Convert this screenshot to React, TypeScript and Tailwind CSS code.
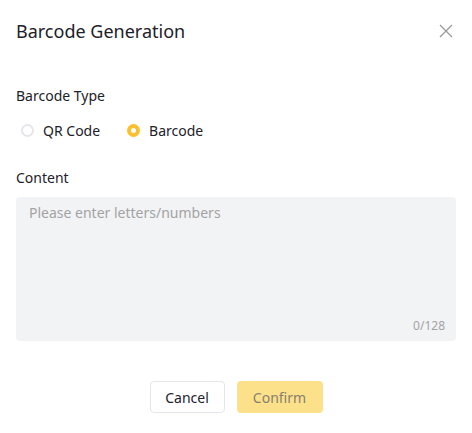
import { useState } from 'react';

const font = { fontFamily: '"Noto Sans", "Segoe UI", sans-serif' };

const Radio = ({ checked, label, onClick }: { checked: boolean; label: string; onClick: () => void }) => (
  <label className="flex items-center cursor-pointer" onClick={onClick}>
    {checked ? (
      <span className="w-[13px] h-[13px] rounded-full bg-[#fbc02d] flex items-center justify-center">
        <span className="w-[5px] h-[5px] rounded-full bg-white" />
      </span>
    ) : (
      <span className="w-[13px] h-[13px] rounded-full border-2 border-[#e5e6eb] bg-white" />
    )}
    <span className="ml-[9px] text-[14px] text-[#1d2129]">{label}</span>
  </label>
);

const App = () => {
  const [type, setType] = useState<'qr' | 'bar'>('bar');
  const [text, setText] = useState('');

  return (
    <div className="w-[472px] h-[433px] bg-white" style={font}>
      <div className="flex items-center justify-between pl-4 pr-[19px] pt-[19px]">
        <h2 className="text-[18px] leading-6 text-[#1d2129]">Barcode Generation</h2>
        <button className="text-[#9a9a9a]">
          <svg width="14" height="14" viewBox="0 0 14 14" fill="none" stroke="currentColor" strokeWidth="1.3">
            <path d="M1 1L13 13M13 1L1 13" />
          </svg>
        </button>
      </div>

      <div className="px-4 pt-[43px]">
        <div className="text-[14px] leading-5 text-[#1d2129]">Barcode Type</div>
        <div className="flex gap-[27px] pl-[5px] mt-[14px]">
          <Radio checked={type === 'qr'} label="QR Code" onClick={() => setType('qr')} />
          <Radio checked={type === 'bar'} label="Barcode" onClick={() => setType('bar')} />
        </div>

        <div className="text-[14px] leading-5 text-[#1d2129] mt-[27px]">Content</div>
        <div className="relative mt-[9px] h-[144px] rounded bg-[#f2f3f5]">
          <textarea
            value={text}
            onChange={(e) => setText(e.target.value.slice(0, 128))}
            placeholder="Please enter letters/numbers"
            className="w-full h-full resize-none bg-transparent px-[13px] py-[6px] text-[14px] leading-5 text-[#1d2129] placeholder:text-[#a3a3a3] outline-none"
            style={font}
          />
          <span className="absolute right-[11px] bottom-[6px] text-[12px] text-[#a3a3a3]">{text.length}/128</span>
        </div>
      </div>

      <div className="flex justify-center gap-3 mt-10">
        <button className="w-[75px] h-8 rounded border border-[#e5e6eb] bg-white text-[14px] text-[#1d2129]">Cancel</button>
        <button className="w-[86px] h-8 rounded bg-[#fde08a] text-[14px] text-[#86806e]">Confirm</button>
      </div>
    </div>
  );
};

export default App;
